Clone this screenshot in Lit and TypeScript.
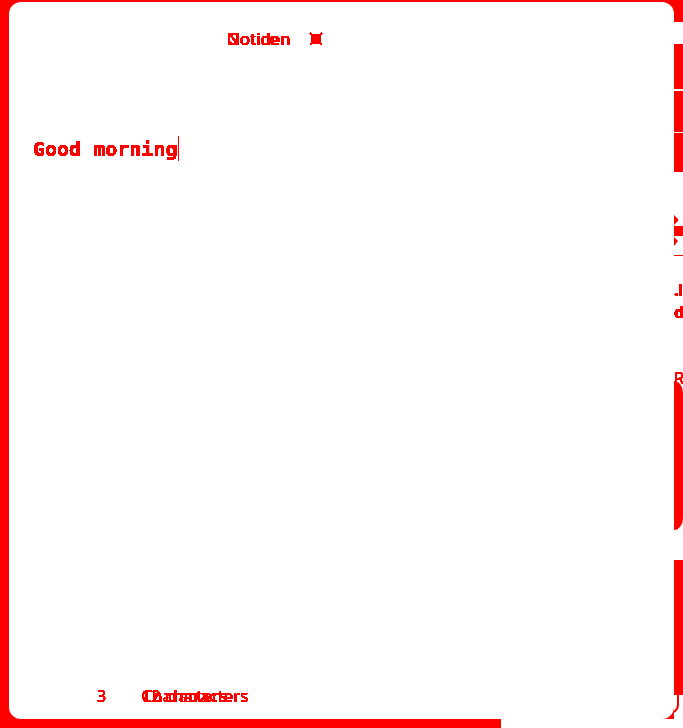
import { LitElement, html, css } from "lit";
import { customElement } from "lit/decorators.js";

@customElement("app-root")
export class AppRoot extends LitElement {
  static styles = css`
    :host { display: block; min-height: 100vh; background: #fff; color: #f00; font: 16px/24px "Noto Sans", sans-serif; }
    * { box-sizing: border-box; }
    .defs { position: absolute; }
    .page { display: grid; grid-template-columns: minmax(0, 1fr) 9px; min-height: 100vh; }
    .frame { display: flex; padding: 2px 0 9px 9px; position: relative; background: #f00; }
    .frame::after { content: ""; position: absolute; right: 0; bottom: 0; height: 9px; width: 173px; background: #fff; }
    .card { flex: 1; display: flex; flex-direction: column; background: #fff; border-radius: 12px; padding: 25px 24px 11px; }
    header { display: flex; align-items: center; gap: 18px; padding-left: 194px; height: 24px; }
    .stack { display: grid; font-size: 17px; filter: url(#crisp); }
    .stack span { grid-area: 1 / 1; white-space: nowrap; }
    .close { border: 0; background: none; padding: 0; width: 14px; height: 14px; display: block; }
    svg { display: block; }
    .editor { margin-top: 85px; display: flex; height: 26px; filter: url(#crisp); }
    .text { font: bold 20px/26px "DejaVu Sans Mono", monospace; white-space: pre; }
    .caret { width: 1px; height: 25px; background: #f00; }
    footer { margin-top: auto; display: flex; gap: 35px; padding-left: 64px; }
    .count { filter: url(#crisp); }
    .strip { display: flex; flex-direction: column; overflow: hidden; }
    .b { background: #f00; flex: none; }
    .h22 { height: 22px; }
    .h45 { height: 45px; margin-top: 22px; }
    .h41 { height: 41px; margin-top: 2px; }
    .h39 { height: 39px; margin-top: 1px; }
    .arrows { margin-top: 43px; }
    .rule { height: 1px; margin-top: 9px; }
    .bit { font: bold 16px/22px "Noto Sans", sans-serif; white-space: nowrap; height: 22px; filter: url(#crisp); }
    .first { margin-top: 23px; }
    .third { margin-top: 44px; height: 14px; font-weight: normal; }
    .bubble { height: 149px; border-radius: 0 9px 9px 0 / 0 12px 12px 0; }
    .h135 { height: 135px; margin-top: 30px; }
  `;
  render() {
    return html`
      <svg class="defs" width="0" height="0" aria-hidden="true"><filter id="crisp" x="0" y="0" width="1" height="1"><feComponentTransfer><feFuncA type="linear" slope="100" intercept="-8" /></feComponentTransfer></filter></svg>
      <div class="page">
        <main class="frame">
          <section class="card">
            <header>
              <div class="stack"><span>Notice</span><span>Gotiden</span></div>
              <button class="close" aria-label="Close">
                <svg width="14" height="14" viewBox="0 0 14 14" shape-rendering="crispEdges"><path d="M4 2h6l2 2v6l-2 2H4l-2-2V4z" fill="#f00" /><path d="M1 1l12 12M13 1L1 13" stroke="#f00" stroke-width="2" /></svg>
              </button>
            </header>
            <div class="editor"><span class="text">Good morning</span><span class="caret"></span></div>
            <footer>
              <span class="count">3</span>
              <div class="stack"><span>12 characters</span><span>Characters</span></div>
            </footer>
          </section>
        </main>
        <aside class="strip">
          <div class="b h22"></div><div class="b h45"></div><div class="b h41"></div><div class="b h39"></div>
          <svg class="arrows" width="9" height="31" viewBox="0 0 9 31"><path d="M0 0l4 4v2l-4 4zM0 11h9v10H0zM0 22l4 4-4 5z" fill="#f00" /></svg>
          <div class="b rule"></div>
          <div class="bit first">.l</div><div class="bit">di</div>
          <div class="bit third">Ra</div>
          <div class="b bubble"></div>
          <div class="b h135"></div>
          <svg width="9" height="18" viewBox="0 0 9 18"><path d="M4 0v10Q4 14 0 17" fill="none" stroke="#f00" stroke-width="2" /></svg>
        </aside>
      </div>`;
  }
}
